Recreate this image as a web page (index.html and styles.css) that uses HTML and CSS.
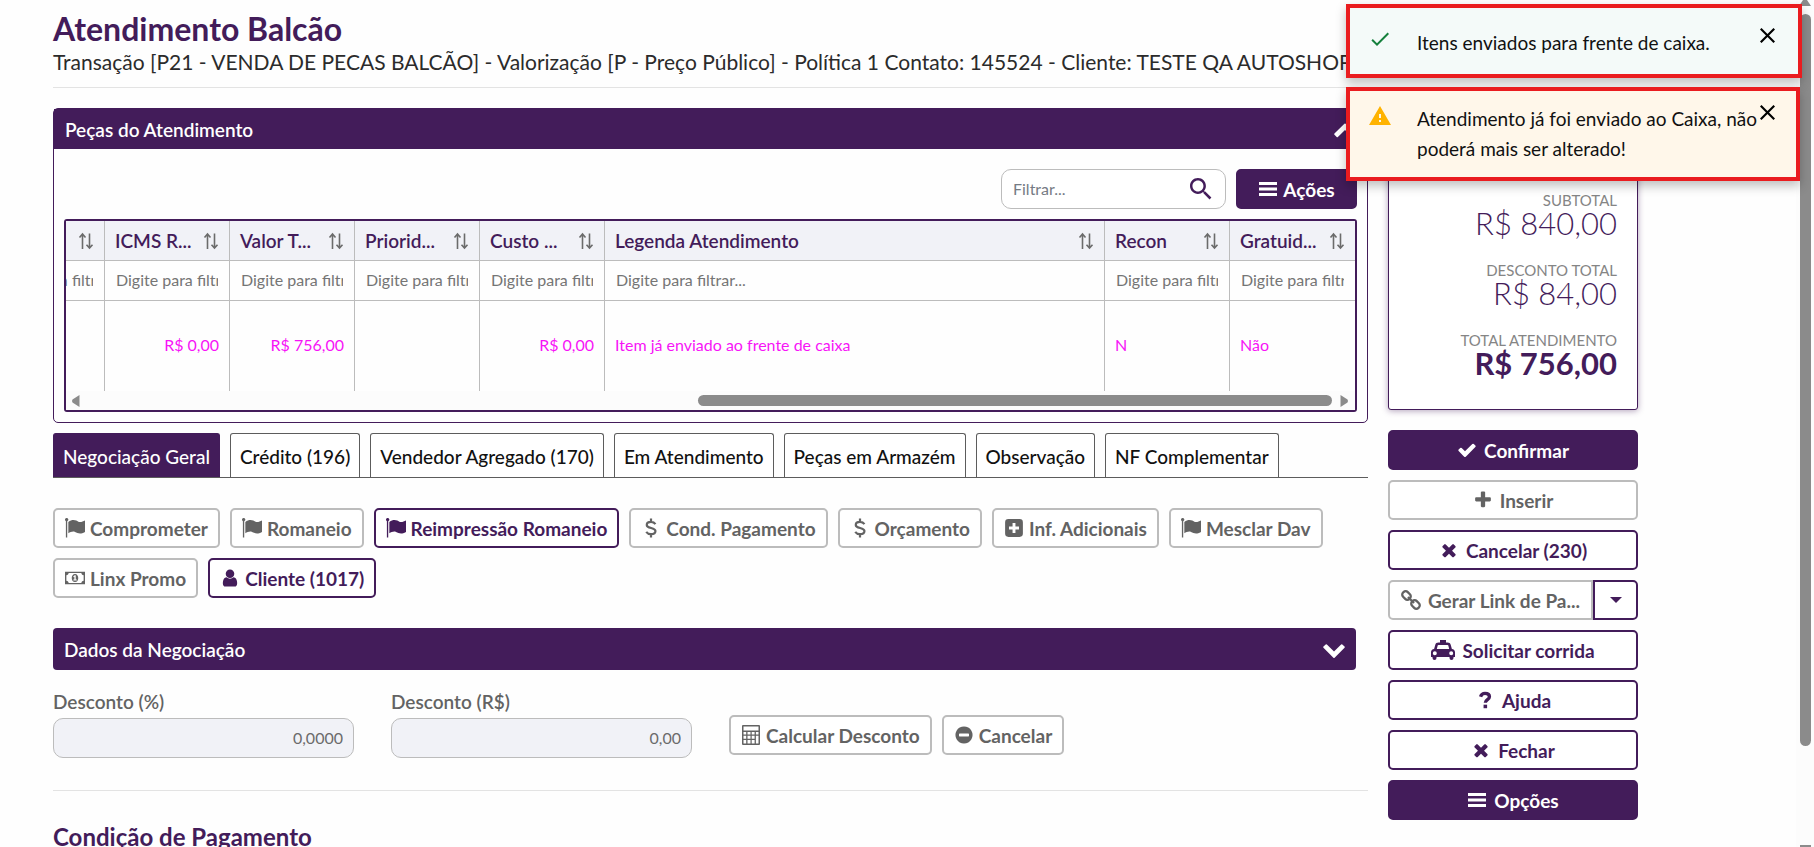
FILE: index.html
```html
<!DOCTYPE html>
<html lang="pt-BR">
<head>
  <meta charset="UTF-8">
  <title>Atendimento Balcão</title>
  <meta name="viewport" content="width=device-width, initial-scale=1.0">
  <link rel="stylesheet" href="styles.css">
</head>
<body>
  <svg class="sprite" aria-hidden="true">
    <symbol id="flag" viewBox="0 0 18 18">
      <path d="M0 1.600a1.500 1.500 0 1 1 2 1.300V17.500H.8V2.900A1.500 1.500 0 0 1 0 1.600z"/>
      <path d="M3 3.500c4-3 7-1.500 9.500 0 1.600.6 3.500-.2 5.500-1.200v10.200c-4.500 2.500-6.500 1-9 0-2-.7-4.300.2-6 1.200z"/>
    </symbol>
    <symbol id="dollar" viewBox="0 0 18 18">
      <path d="M13 5.500C12 4 10.500 3.500 9 3.500c-2.300 0-3.800 1-3.800 2.700C5.200 10 13 8 13 11.800c0 1.800-1.700 2.800-4 2.800-1.800 0-3.300-.7-4.300-2.100M9 .5v3M9 14.500v3" fill="none" stroke="currentColor" stroke-width="2"/>
    </symbol>
    <symbol id="plus-square" viewBox="0 0 18 18">
      <path fill-rule="evenodd" d="M4 1h10a3 3 0 0 1 3 3v10a3 3 0 0 1-3 3H4a3 3 0 0 1-3-3V4a3 3 0 0 1 3-3zm3.700 3.500v3.200H4.500v2.600h3.200v3.200h2.600v-3.200h3.200V7.700h-3.200V4.500z"/>
    </symbol>
    <symbol id="money" viewBox="0 1 22 16">
      <path fill-rule="evenodd" d="M0 2h22v14H0zM4 3.500C4 4.800 3 6 1.500 6v6C3 12 4 13.200 4 14.500h14c0-1.300 1-2.500 2.500-2.500V6C19 6 18 4.800 18 3.500z"/>
      <path fill-rule="evenodd" d="M11 4.500c2.200 0 3.600 2 3.600 4.500s-1.400 4.500-3.600 4.500S7.400 11.500 7.400 9 8.800 4.500 11 4.500zM10.600 6L9 7.300l.7.900.6-.5v3H9.200v1.100h3.700v-1.100h-1.100V6z"/>
    </symbol>
    <symbol id="user" viewBox="0 0 1792 1792">
      <path d="M1536 1399q0 109-62.500 187t-150.500 78h-854q-88 0-150.500-78t-62.500-187q0-85 8.500-160.500t31.500-152 58.500-131 94-89 134.500-34.500q131 128 313 128t313-128q76 0 134.500 34.500t94 89 58.500 131 31.500 152 8.500 160.500zm-256-887q0 159-112.500 271.500t-271.500 112.500-271.500-112.500-112.500-271.500 112.500-271.500 271.500-112.500 271.500 112.500 112.500 271.500z"/>
    </symbol>
    <symbol id="check" viewBox="0 0 1792 1792">
      <path d="M1671 566q0 40-28 68l-724 724-136 136q-28 28-68 28t-68-28l-136-136-362-362q-28-28-28-68t28-68l136-136q28-28 68-28t68 28l294 295 656-657q28-28 68-28t68 28l136 136q28 28 28 68z"/>
    </symbol>
    <symbol id="plus" viewBox="0 0 1792 1792">
      <path d="M1600 736v192q0 40-28 68t-68 28h-416v416q0 40-28 68t-68 28h-192q-40 0-68-28t-28-68v-416h-416q-40 0-68-28t-28-68v-192q0-40 28-68t68-28h416v-416q0-40 28-68t68-28h192q40 0 68 28t28 68v416h416q40 0 68 28t28 68z"/>
    </symbol>
    <symbol id="times" viewBox="0 0 1792 1792">
      <path d="M1490 1322q0 40-28 68l-136 136q-28 28-68 28t-68-28l-294-294-294 294q-28 28-68 28t-68-28l-136-136q-28-28-28-68t28-68l294-294-294-294q-28-28-28-68t28-68l136-136q28-28 68-28t68 28l294 294 294-294q28-28 68-28t68 28l136 136q28 28 28 68t-28 68l-294 294 294 294q28 28 28 68z"/>
    </symbol>
    <symbol id="chain" viewBox="0 0 20 20">
      <g fill="none" stroke="currentColor" stroke-width="2.300">
        <rect x="1" y="2.200" width="9" height="6.600" rx="3" transform="rotate(45 5.500 5.500)"/>
        <rect x="10" y="11.200" width="9" height="6.600" rx="3" transform="rotate(45 14.500 14.500)"/>
        <path d="M7 7l6 6"/>
      </g>
    </symbol>
    <symbol id="taxi" viewBox="0 0 24 20">
      <path fill-rule="evenodd" d="M9 0h6v2.500h1.500c1.800 0 2.800.8 3.200 2.300l1.200 4.200c1.800.1 3.100 1.500 3.100 3.300V17h-1.500v1a2 2 0 0 1-4 0v-1h-13v1a2 2 0 0 1-4 0v-1H0v-4.700C0 10.500 1.300 9.100 3.100 9l1.200-4.200c.4-1.500 1.400-2.300 3.200-2.300H9zM7.500 5a.8.8 0 0 0-.8.600L5.800 9h12.400l-.9-3.400a.8.8 0 0 0-.8-.6zM3.800 11.200a2 2 0 1 0 0 4 2 2 0 0 0 0-4zm16.400 0a2 2 0 1 0 0 4 2 2 0 0 0 0-4z"/>
    </symbol>
    <symbol id="question" viewBox="0 0 18 18">
      <path d="M5 6c.6-2 2-3 4-3 2.400 0 4 1.200 4 3 0 2.600-3.700 2.600-3.700 5.400" fill="none" stroke="currentColor" stroke-width="3"/>
      <path d="M7.700 13.200h3.200v3.200H7.700z"/>
    </symbol>
    <symbol id="bars" viewBox="-1 -1 20 20">
      <path d="M0 2h18v3H0zM0 7.500h18v3H0zM0 13h18v3H0z"/>
    </symbol>
    <symbol id="calculator" viewBox="0 0 18 20">
      <path fill-rule="evenodd" d="M1 0h16a1 1 0 0 1 1 1v18a1 1 0 0 1-1 1H1a1 1 0 0 1-1-1V1a1 1 0 0 1 1-1zm.5 1.500v4h15v-4zm0 5.500v2.500h2.700V7zm4 0v2.500h3V7zm4.200 0v2.500h2.900V7zm4.200 0v2.500h2.600V7zM1.500 10.800v3h2.700v-3zm4 0v3h3v-3zm4.200 0v3h2.900v-3zm4.200 0v7.700h2.600v-7.700zM1.500 15v3.500h2.700V15zm4 0v3.500h3V15zm4.200 0v3.500h2.900V15z"/>
    </symbol>
    <symbol id="minus-circle" viewBox="0 0 1792 1792">
      <path d="M1344 960v-128q0-26-19-45t-45-19h-768q-26 0-45 19t-19 45v128q0 26 19 45t45 19h768q26 0 45-19t19-45zm320-64q0 209-103 385.500t-279.500 279.500-385.500 103-385.500-103-279.500-279.500-103-385.500 103-385.500 279.500-279.500 385.500-103 385.500 103 279.500 279.500 103 385.500z"/>
    </symbol>
    <symbol id="chevron-down" viewBox="0 0 1792 1792">
      <path d="M1683 808l-742 741q-19 19-45 19t-45-19l-742-741q-19-19-19-45.500t19-45.500l166-165q19-19 45-19t45 19l531 531 531-531q19-19 45-19t45 19l166 165q19 19 19 45.500t-19 45.500z"/>
    </symbol>
    <symbol id="chevron-up" viewBox="0 0 1792 1792">
      <path d="M1683 1331l-166 165q-19 19-45 19t-45-19l-531-531-531 531q-19 19-45 19t-45-19l-166-165q-19-19-19-45.500t19-45.500l742-741q19-19 45-19t45 19l742 741q19 19 19 45.500t-19 45.500z"/>
    </symbol>
    <symbol id="sort" viewBox="0 0 16 18">
      <path d="M4.500 17V2.500M1.500 5.500l3-3.500 3 3.500M11.500 1.500V16M8.500 12.800l3 3.200 3-3.200" fill="none" stroke="currentColor" stroke-width="1.600"/>
    </symbol>
    <symbol id="search" viewBox="3 3 18 18">
      <path d="M15.500 14h-.79l-.28-.27C15.410 12.590 16 11.110 16 9.500 16 5.910 13.090 3 9.500 3S3 5.910 3 9.500 5.910 16 9.500 16c1.610 0 3.090-.59 4.230-1.570l.27.28v.79l5 4.990L20.490 19l-4.990-5zm-6 0C7.010 14 5 11.990 5 9.500S7.010 5 9.500 5 14 7.010 14 9.500 11.990 14 9.500 14z"/>
    </symbol>
    <symbol id="done" viewBox="0 0 24 24">
      <path d="M9 16.170L4.830 12l-1.420 1.410L9 19 21 7l-1.410-1.410z"/>
    </symbol>
    <symbol id="warning" viewBox="0 0 24 24">
      <path d="M1 21h22L12 2 1 21zm12-3h-2v-2h2v2zm0-4h-2v-4h2v4z"/>
    </symbol>
    <symbol id="close" viewBox="5 5 14 14">
      <path d="M19 6.410L17.590 5 12 10.590 6.410 5 5 6.410 10.590 12 5 17.590 6.410 19 12 13.410 17.590 19 19 17.590 13.410 12z"/>
    </symbol>
  </svg>

  <main class="page">
    <header class="page-header">
      <h1>Atendimento Balcão</h1>
      <p>Transação [P21 - VENDA DE PECAS BALCÃO] - Valorização [P - Preço Público] - Política 1 Contato: 145524 - Cliente: TESTE QA AUTOSHOP</p>
    </header>

    <div class="columns">
      <div class="content">
        <section class="panel">
          <h2 class="panel-title">Peças do Atendimento <svg class="chevron"><use href="#chevron-up"/></svg></h2>
          <div class="panel-body">
            <div class="toolbar">
              <label class="search">
                <input type="text" placeholder="Filtrar..." aria-label="Filtrar">
                <svg class="search-icon"><use href="#search"/></svg>
              </label>
              <button class="btn primary actions"><svg class="icon"><use href="#bars"/></svg>Ações</button>
            </div>
            <div class="grid">
              <div class="grid-view">
                <table>
                  <colgroup>
                    <col><col><col><col><col><col class="wide"><col><col>
                  </colgroup>
                  <thead>
                    <tr>
                      <th><div class="th"><span></span><svg class="sort"><use href="#sort"/></svg></div></th>
                      <th><div class="th"><span>ICMS R...</span><svg class="sort"><use href="#sort"/></svg></div></th>
                      <th><div class="th"><span>Valor T...</span><svg class="sort"><use href="#sort"/></svg></div></th>
                      <th><div class="th"><span>Priorid...</span><svg class="sort"><use href="#sort"/></svg></div></th>
                      <th><div class="th"><span>Custo ...</span><svg class="sort"><use href="#sort"/></svg></div></th>
                      <th><div class="th"><span>Legenda Atendimento</span><svg class="sort"><use href="#sort"/></svg></div></th>
                      <th><div class="th"><span>Recon</span><svg class="sort"><use href="#sort"/></svg></div></th>
                      <th><div class="th"><span>Gratuid...</span><svg class="sort"><use href="#sort"/></svg></div></th>
                    </tr>
                    <tr class="filters">
                      <td><input type="text" placeholder="Digite para filtrar..." aria-label="Filtro"></td>
                      <td><input type="text" placeholder="Digite para filtrar..." aria-label="Filtro ICMS"></td>
                      <td><input type="text" placeholder="Digite para filtrar..." aria-label="Filtro Valor"></td>
                      <td><input type="text" placeholder="Digite para filtrar..." aria-label="Filtro Prioridade"></td>
                      <td><input type="text" placeholder="Digite para filtrar..." aria-label="Filtro Custo"></td>
                      <td><input type="text" placeholder="Digite para filtrar..." aria-label="Filtro Legenda"></td>
                      <td><input type="text" placeholder="Digite para filtrar..." aria-label="Filtro Recon"></td>
                      <td><input type="text" placeholder="Digite para filtrar..." aria-label="Filtro Gratuidade"></td>
                    </tr>
                  </thead>
                  <tbody>
                    <tr class="row">
                      <td></td>
                      <td class="num">R$ 0,00</td>
                      <td class="num">R$ 756,00</td>
                      <td></td>
                      <td class="num">R$ 0,00</td>
                      <td>Item já enviado ao frente de caixa</td>
                      <td>N</td>
                      <td>Não</td>
                    </tr>
                  </tbody>
                </table>
              </div>
              <div class="hscroll">
                <svg class="arrow" viewBox="0 0 8 12"><path d="M8 0v12L1 7.500q-1-1.500 0-3z"/></svg>
                <div class="hscroll-track"><div class="hscroll-thumb"></div></div>
                <svg class="arrow" viewBox="0 0 8 12"><path d="M0 0v12l7-4.500q1-1.500 0-3z"/></svg>
              </div>
            </div>
          </div>
        </section>

        <nav class="tabs">
          <button class="tab active">Negociação Geral</button>
          <button class="tab">Crédito (196)</button>
          <button class="tab">Vendedor Agregado (170)</button>
          <button class="tab">Em Atendimento</button>
          <button class="tab">Peças em Armazém</button>
          <button class="tab">Observação</button>
          <button class="tab">NF Complementar</button>
        </nav>

        <div class="buttons">
          <button class="btn muted"><svg class="icon"><use href="#flag"/></svg>Comprometer</button>
          <button class="btn muted"><svg class="icon"><use href="#flag"/></svg>Romaneio</button>
          <button class="btn"><svg class="icon"><use href="#flag"/></svg>Reimpressão Romaneio</button>
          <button class="btn muted"><svg class="icon"><use href="#dollar"/></svg>Cond. Pagamento</button>
          <button class="btn muted"><svg class="icon"><use href="#dollar"/></svg>Orçamento</button>
          <button class="btn muted"><svg class="icon"><use href="#plus-square"/></svg>Inf. Adicionais</button>
          <button class="btn muted"><svg class="icon"><use href="#flag"/></svg>Mesclar Dav</button>
          <button class="btn muted"><svg class="icon"><use href="#money"/></svg>Linx Promo</button>
          <button class="btn"><svg class="icon"><use href="#user"/></svg>Cliente (1017)</button>
        </div>

        <h2 class="panel-title closed">Dados da Negociação <svg class="chevron"><use href="#chevron-down"/></svg></h2>

        <div class="discount">
          <div class="field">
            <label for="desconto-pct">Desconto (%)</label>
            <input type="text" id="desconto-pct" value="0,0000" readonly>
          </div>
          <div class="field">
            <label for="desconto-valor">Desconto (R$)</label>
            <input type="text" id="desconto-valor" value="0,00" readonly>
          </div>
          <div class="discount-buttons">
            <button class="btn muted"><svg class="icon"><use href="#calculator"/></svg>Calcular Desconto</button>
            <button class="btn muted"><svg class="icon"><use href="#minus-circle"/></svg>Cancelar</button>
          </div>
        </div>

        <h2 class="section-title">Condição de Pagamento</h2>
      </div>

      <aside class="side">
        <dl class="totals">
          <dt>SUBTOTAL</dt>
          <dd>R$ 840,00</dd>
          <dt>DESCONTO TOTAL</dt>
          <dd>R$ 84,00</dd>
          <dt>TOTAL ATENDIMENTO</dt>
          <dd class="total">R$ 756,00</dd>
        </dl>
        <button class="btn primary confirm"><svg class="icon"><use href="#check"/></svg>Confirmar</button>
        <button class="btn muted"><svg class="icon"><use href="#plus"/></svg>Inserir</button>
        <button class="btn"><svg class="icon"><use href="#times"/></svg>Cancelar (230)</button>
        <div class="split">
          <button class="btn muted"><svg class="icon"><use href="#chain"/></svg>Gerar Link de Pa...</button>
          <button class="btn" aria-label="Mais opções"><svg class="caret" viewBox="0 0 12 6"><path d="M0 0h12L6 6z"/></svg></button>
        </div>
        <button class="btn"><svg class="icon icon-wide"><use href="#taxi"/></svg>Solicitar corrida</button>
        <button class="btn"><svg class="icon"><use href="#question"/></svg>Ajuda</button>
        <button class="btn"><svg class="icon"><use href="#times"/></svg>Fechar</button>
        <button class="btn primary"><svg class="icon"><use href="#bars"/></svg>Opções</button>
      </aside>
    </div>
  </main>

  <div class="vscroll">
    <svg class="varrow" viewBox="0 0 12 6"><path d="M4 0h4l4 6H0z"/></svg>
    <div class="vscroll-track"><div class="vscroll-thumb"></div></div>
    <div class="vscroll-end"></div>
  </div>

  <div class="toasts">
    <div class="toast success">
      <svg class="toast-icon"><use href="#done"/></svg>
      <p>Itens enviados para frente de caixa.</p>
      <button class="toast-close" aria-label="Fechar"><svg><use href="#close"/></svg></button>
    </div>
    <div class="toast alert">
      <svg class="toast-icon"><use href="#warning"/></svg>
      <p>Atendimento já foi enviado ao Caixa, não poderá mais ser alterado!</p>
      <button class="toast-close" aria-label="Fechar"><svg><use href="#close"/></svg></button>
    </div>
  </div>
</body>
</html>
```
FILE: styles.css
```css
* {
  box-sizing: border-box;
}
body {
  font-family: Lato, sans-serif;
  font-size: 19px;
  color: #2b2b2b;
  background: #fefefe;
  display: flex;
  height: 100vh;
  margin: 0;
  overflow: hidden;
}
button, input {
  font-family: inherit;
}
h1, h2, p, dl, dd {
  margin: 0;
}
svg {
  fill: currentColor;
  flex: none;
}
.sprite {
  display: none;
}

/* page */
.page {
  flex: 1;
  min-width: 0;
  padding: 10px 158px 0 53px;
}
.page-header {
  border-bottom: 1px solid #e3e3e3;
  height: 78px;
  white-space: nowrap;
}
h1 {
  font-size: 32px;
  line-height: 38px;
  font-weight: 700;
  color: #431c5a;
}
.page-header p {
  font-size: 21px;
  line-height: 28px;
}
.columns {
  display: grid;
  grid-template-columns: minmax(0, 1fr) 250px;
  gap: 20px;
  padding-top: 20px;
}

/* panel */
.panel {
  border: 1px solid #431c5a;
  border-radius: 5px;
}
.panel-title {
  display: flex;
  justify-content: space-between;
  align-items: center;
  height: 40px;
  padding: 0 10px 0 11px;
  font-size: 19px;
  font-weight: 600;
  color: #fff;
  background: #431c5a;
}
.panel-title.closed {
  height: 42px;
  margin: 30px 12px 0 0;
  border-radius: 4px;
}
.chevron {
  width: 24px;
  height: 24px;
}
.panel-body {
  padding: 20px 10px 10px;
}
.toolbar {
  display: flex;
  justify-content: flex-end;
  gap: 10px;
  margin-bottom: 10px;
}
.search {
  display: flex;
  align-items: center;
  width: 225px;
  height: 40px;
  padding: 0 13px 0 11px;
  border: 1px solid #bcbcbc;
  border-radius: 10px;
  background: #fff;
}
.search input {
  flex: 1;
  min-width: 0;
  padding: 0 0 2px;
  border: 0;
  outline: 0;
  font-size: 16px;
}
.search input::placeholder {
  color: #757b84;
}
.search-icon {
  width: 22px;
  height: 22px;
  color: #431c5a;
}

/* grid */
.grid {
  border: 2px solid #431c5a;
  border-radius: 3px;
}
.grid-view {
  display: flex;
  justify-content: flex-end;
  overflow: hidden;
}
table {
  flex: none;
  width: 1375px;
  table-layout: fixed;
  border-collapse: separate;
  border-spacing: 0;
}
.wide {
  width: 500px;
}
th, td {
  padding: 0 10px;
  border-right: 1px solid #bcbcbc;
  text-align: left;
}
th:last-child, td:last-child {
  border-right: 0;
}
th {
  height: 40px;
  font-size: 19px;
  font-weight: 600;
  color: #431c5a;
  background: #f1f2f7;
  border-bottom: 1px solid #bcbcbc;
}
.th {
  display: flex;
  justify-content: space-between;
  align-items: center;
  white-space: nowrap;
}
.sort {
  width: 16px;
  height: 18px;
  color: #6b6b6b;
}
.filters td {
  height: 40px;
  border-bottom: 1px solid #bcbcbc;
}
.filters input {
  display: block;
  width: 100%;
  padding: 0 1px 2px;
  border: 0;
  outline: 0;
  font-size: 16px;
  background: transparent;
}
.filters input::placeholder {
  color: #757575;
}
.row td {
  height: 90px;
  padding-bottom: 3px;
  font-size: 16px;
  color: #f714f7;
}
.row .num {
  text-align: right;
}
.hscroll {
  display: flex;
  align-items: center;
  gap: 8px;
  height: 19px;
  padding: 0 6px 0 5px;
  color: #8b8b8b;
  background: #fcfcfc;
}
.arrow {
  width: 9px;
  height: 12px;
}
.hscroll-track {
  flex: 1;
}
.hscroll-thumb {
  width: 51%;
  height: 11px;
  margin-left: auto;
  border-radius: 6px;
  background: #8b8b8b;
}

/* tabs */
.tabs {
  display: flex;
  gap: 10px;
  margin-top: 10px;
  border-bottom: 1px solid #5c5c5c;
}
.tab {
  height: 44px;
  padding: 2px 9px 0;
  border: 1px solid #5c5c5c;
  border-bottom: 0;
  border-radius: 3px 3px 0 0;
  font-size: 19px;
  font-weight: 500;
  color: #111;
  background: #fff;
  white-space: nowrap;
}
.tab.active {
  color: #fff;
  background: #431c5a;
  border-color: #431c5a;
}

/* buttons */
.btn {
  display: flex;
  justify-content: center;
  align-items: center;
  gap: 5px;
  height: 40px;
  padding: 0 10px;
  border: 2px solid #431c5a;
  border-radius: 5px;
  font-size: 19px;
  font-weight: 700;
  color: #431c5a;
  background: #fff;
  white-space: nowrap;
}
.btn.muted {
  color: #636363;
  border-color: #bcbcbc;
}
.btn.primary {
  color: #fff;
  background: #431c5a;
}
.actions {
  width: 121px;
}
.icon {
  width: 20px;
  height: 20px;
}
.icon-wide {
  width: 24px;
}
.buttons {
  display: flex;
  flex-wrap: wrap;
  gap: 10px;
  margin-top: 30px;
}

/* discount */
.discount {
  display: flex;
  align-items: flex-end;
  gap: 37px;
  padding: 20px 0 32px;
  border-bottom: 1px solid #e3e3e3;
}
.field {
  width: 301px;
}
.field label {
  display: block;
  margin-bottom: 5px;
  font-size: 19px;
  line-height: 23px;
  font-weight: 600;
  color: #636363;
}
.field input {
  display: block;
  width: 100%;
  height: 40px;
  padding: 0 10px 2px;
  border: 1px solid #bcbcbc;
  border-radius: 10px;
  font-size: 16px;
  text-align: right;
  color: #6b6b6b;
  background: #f1f2f7;
}
.discount-buttons {
  display: flex;
  gap: 10px;
  padding-bottom: 3px;
}
.section-title {
  margin-top: 30px;
  font-size: 24px;
  line-height: 32px;
  font-weight: 700;
  color: #431c5a;
}

/* side column */
.side {
  display: flex;
  flex-direction: column;
  gap: 10px;
}
.side .btn {
  gap: 7px;
}
.totals {
  height: 302px;
  padding: 81px 20px 0;
  border: 1px solid #431c5a;
  border-radius: 3px;
  text-align: right;
  background: #fff;
  box-shadow: 0 1px 6px rgba(67, 28, 90, 0.4);
}
.totals dt {
  font-size: 15px;
  line-height: 20px;
  color: #858585;
}
.totals dd {
  height: 50px;
  font-size: 31px;
  line-height: 27px;
  font-weight: 300;
  color: #431c5a;
}
.totals .total {
  font-weight: 700;
}
.confirm {
  margin-top: 10px;
}
.split {
  display: flex;
}
.split .btn:first-child {
  flex: 1;
  border-radius: 5px 0 0 5px;
}
.split .btn:last-child {
  width: 45px;
  border-radius: 0 5px 5px 0;
}
.caret {
  width: 12px;
  height: 6px;
}

/* page scrollbar */
.vscroll {
  display: flex;
  flex-direction: column;
  align-items: center;
  gap: 8px;
  width: 18px;
  color: #8b8b8b;
  background: #fcfcfc;
}
.varrow {
  width: 12px;
  height: 6px;
}
.vscroll-track {
  flex: 1;
}
.vscroll-thumb {
  width: 11px;
  height: 89%;
  border-radius: 6px;
  background: #8b8b8b;
}
.vscroll-end {
  width: 11px;
  height: 2px;
  background: #8b8b8b;
}

/* notifications over the page */
.toasts {
  position: absolute;
  top: 4px;
  right: 12px;
  display: flex;
  flex-direction: column;
  gap: 9px;
  width: 456px;
}
.toast {
  display: flex;
  align-items: flex-start;
  padding: 19px 23px 12px 18px;
  border: 4px solid #ea1c1f;
  color: #111;
  background: #f4faf9;
  box-shadow: 0 5px 10px rgba(0, 0, 0, 0.25);
}
.toast.alert {
  margin-right: 2px;
  padding: 13px 21px 13px 18px;
  background: #fff7ea;
}
.toast p {
  flex: 1;
  margin-left: 25px;
  font-size: 19px;
  line-height: 30px;
}
.toast.success p {
  padding: 1px 0 4px;
}
.toast-icon {
  width: 24px;
  height: 24px;
  color: #15803d;
}
.alert .toast-icon {
  color: #ffb300;
}
.toast-close {
  padding: 0;
  margin-top: 1px;
  border: 0;
  color: #000;
  background: none;
}
.toast-close svg {
  display: block;
  width: 15px;
  height: 15px;
}
```
